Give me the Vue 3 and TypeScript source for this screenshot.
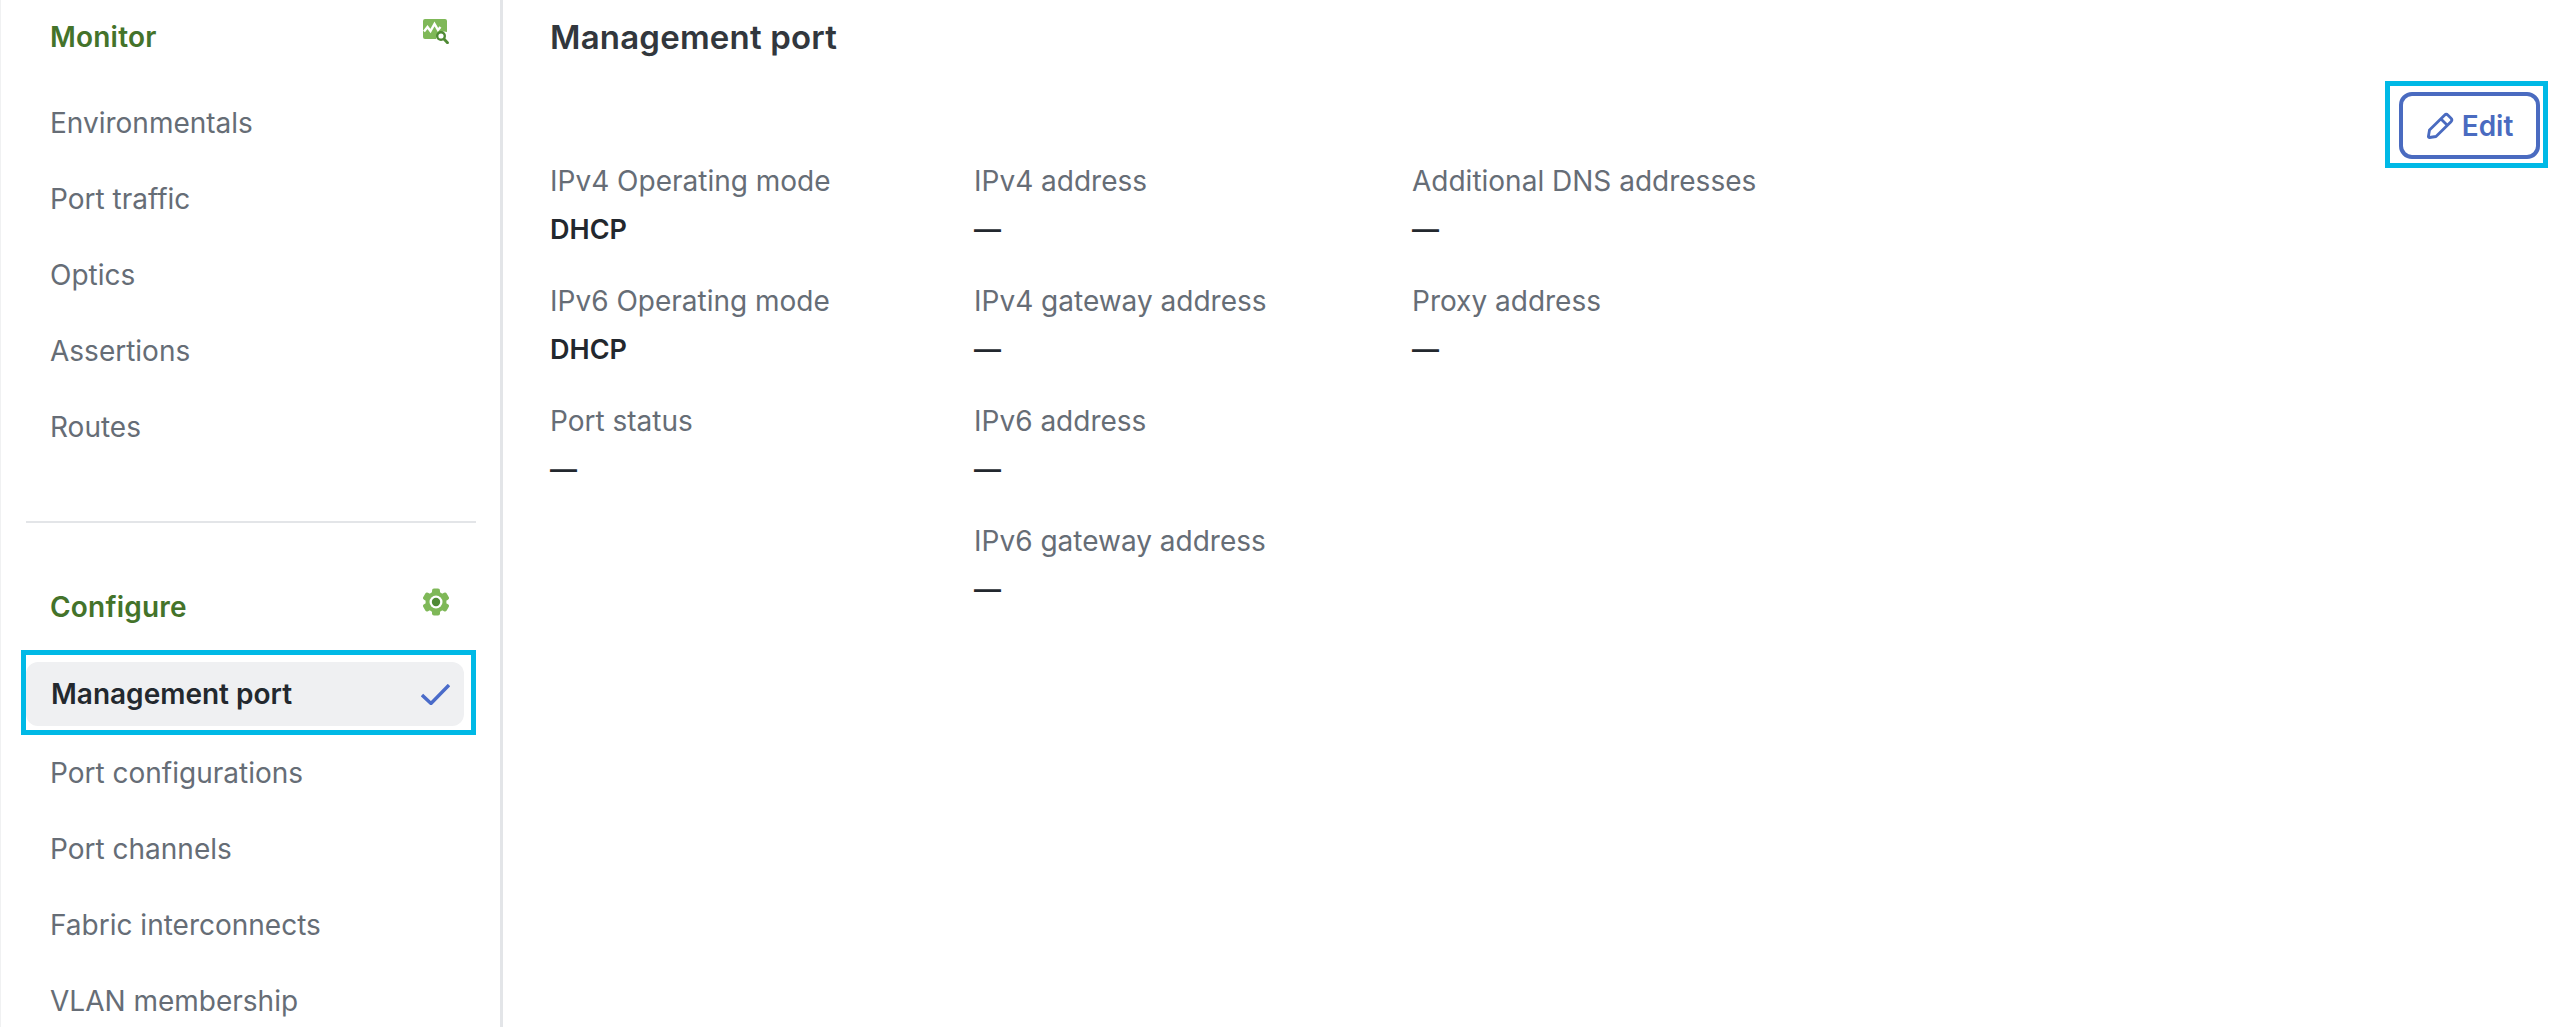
<template>
  <div class="page">
    <aside class="sidebar">
      <section class="group group-monitor">
        <div class="group-head">
          <span class="group-title">Monitor</span>
          <svg class="group-icon" viewBox="0 0 26 25" width="26" height="25">
            <path d="M2 0h20a2 2 0 0 1 2 2v11a8 8 0 0 0-11 7H2a2 2 0 0 1-2-2V2a2 2 0 0 1 2-2z" fill="#7fb858" />
            <path d="M1 12.500l3.500-4.500 3 4 4-7 3.500 6 2.500-3" fill="none" stroke="#fff" stroke-width="2.400" />
            <circle cx="18" cy="17" r="3.800" fill="none" stroke="#4f8a34" stroke-width="2.400" />
            <path d="M21 20l3.500 3.800" stroke="#4f8a34" stroke-width="2.800" stroke-linecap="round" />
          </svg>
        </div>
        <a v-for="item in monitorItems" :key="item" class="nav-item">{{ item }}</a>
      </section>

      <div class="divider"></div>

      <section class="group group-configure">
        <div class="group-head">
          <span class="group-title">Configure</span>
          <svg class="group-icon" viewBox="0 0 26 28" width="26" height="28">
            <circle cx="13" cy="14" r="10.500" fill="#7fb858" />
            <rect x="9" y="0.500" width="8" height="27" rx="2" fill="#7fb858" />
            <rect x="9" y="0.500" width="8" height="27" rx="2" fill="#7fb858" transform="rotate(60 13 14)" />
            <rect x="9" y="0.500" width="8" height="27" rx="2" fill="#7fb858" transform="rotate(120 13 14)" />
            <circle cx="13" cy="14" r="6.500" fill="#fff" />
            <circle cx="13" cy="14" r="4.200" fill="#4f8a34" />
          </svg>
        </div>
        <div class="callout">
          <a class="nav-item active">
            <span>Management port</span>
            <svg class="check" viewBox="0 0 29 21" width="29" height="21">
              <path d="M1 11l9 8.500L28 1" fill="none" stroke="#4a6bc9" stroke-width="3.400" />
            </svg>
          </a>
        </div>
        <a v-for="item in configureItems" :key="item" class="nav-item">{{ item }}</a>
      </section>
    </aside>

    <main class="content">
      <h1 class="title">Management port</h1>
      <div class="toolbar">
        <div class="callout-edit">
          <button type="button" class="edit-btn">
            <svg viewBox="0 0 28 28" width="28" height="28">
              <path
                d="M18.500 3.200a2.500 2.500 0 0 1 3.500 0l3 3a2.500 2.500 0 0 1 0 3.500L10 24.500 3.500 25.500a1 1 0 0 1-1.100-1.100L3.500 18z M15 7l6 6"
                fill="none"
                stroke="#4a6bc0"
                stroke-width="2.800"
                stroke-linejoin="round"
              />
            </svg>
            Edit
          </button>
        </div>
      </div>
      <div class="fields">
        <div v-for="(col, idx) in columns" :key="idx" class="column">
          <div v-for="field in col" :key="field.label" class="field">
            <div class="field-label">{{ field.label }}</div>
            <div class="field-value">{{ field.value }}</div>
          </div>
        </div>
      </div>
    </main>
  </div>
</template>

<script setup lang="ts">
interface Field {
  label: string
  value: string
}

const monitorItems = ['Environmentals', 'Port traffic', 'Optics', 'Assertions', 'Routes']
const configureItems = ['Port configurations', 'Port channels', 'Fabric interconnects', 'VLAN membership']

const columns: Field[][] = [
  [
    { label: 'IPv4 Operating mode', value: 'DHCP' },
    { label: 'IPv6 Operating mode', value: 'DHCP' },
    { label: 'Port status', value: '—' }
  ],
  [
    { label: 'IPv4 address', value: '—' },
    { label: 'IPv4 gateway address', value: '—' },
    { label: 'IPv6 address', value: '—' },
    { label: 'IPv6 gateway address', value: '—' }
  ],
  [
    { label: 'Additional DNS addresses', value: '—' },
    { label: 'Proxy address', value: '—' }
  ]
]
</script>

<style>
html,
body {
  margin: 0;
  background: #fff;
  overflow: hidden;
}
</style>

<style scoped>
.page {
  display: flex;
  height: 1027px;
  overflow: hidden;
  font-family: Inter, "Liberation Sans", sans-serif;
  color: #23282e;
}

.sidebar {
  width: 503px;
  flex: none;
  box-sizing: border-box;
  border-right: 3px solid #e3e5e8;
  border-left: 1px solid #f0f1f2;
  padding: 0 24px 0 25px;
}

.group-head {
  display: flex;
  justify-content: space-between;
  align-items: flex-start;
  height: 40px;
  padding: 0 27px 0 24px;
}

.group-title {
  font-weight: 600;
  font-size: 28px;
  letter-spacing: 0.2px;
  line-height: 40px;
  color: #44732a;
}

.group-monitor {
  padding-top: 17px;
}

.group-monitor .group-head {
  margin-bottom: 28px;
}

.group-monitor .group-icon {
  margin-top: 2px;
}

.group-configure {
  padding-top: 64px;
}

.group-configure .group-head {
  margin-bottom: 23px;
}

.group-configure .group-icon {
  margin-top: 1px;
}

.divider {
  height: 2px;
  margin: 56px 0 0 0;
  background: #e3e5e8;
}

.nav-item {
  display: flex;
  align-items: center;
  justify-content: space-between;
  height: 76px;
  padding: 0 24px;
  font-size: 28px;
  color: #666d76;
}

.callout {
  box-sizing: border-box;
  height: 85px;
  width: 455px;
  margin-left: -5px;
  padding: 7px 7px 4px 0;
  border: 5px solid #00b9e6;
}

.nav-item.active {
  box-sizing: border-box;
  height: 64px;
  width: 438px;
  padding: 0 14px 0 25px;
  border-radius: 12px;
  background: #eff0f2;
  font-weight: 600;
  color: #23282e;
}

.content {
  flex: 1;
  min-width: 0;
  padding: 0 10px 0 47px;
}

.title {
  margin: 0;
  padding-top: 17px;
  font-weight: 600;
  font-size: 33px;
  letter-spacing: 0.2px;
  line-height: 40px;
  color: #32373d;
}

.toolbar {
  display: flex;
  justify-content: flex-end;
  margin-top: 24px;
}

.callout-edit {
  box-sizing: border-box;
  width: 163px;
  height: 87px;
  padding: 6px 3px 4px 9px;
  border: 5px solid #00b9e6;
}

.edit-btn {
  display: flex;
  align-items: center;
  justify-content: center;
  gap: 8px;
  box-sizing: border-box;
  width: 141px;
  height: 67px;
  padding: 0;
  border: 4px solid #4a6bc0;
  border-radius: 13px;
  background: #fff;
  font-family: Inter, sans-serif;
  font-size: 28px;
  font-weight: 600;
  color: #4a6bc0;
}

.fields {
  display: grid;
  grid-template-columns: 424px 438px 1fr;
  margin-top: -7px;
}

.field {
  height: 120px;
}

.field-label {
  font-size: 28px;
  line-height: 40px;
  color: #666d76;
}

.field-value {
  margin-top: 9px;
  font-size: 27px;
  line-height: 40px;
  font-weight: 600;
  color: #23282e;
}
</style>
